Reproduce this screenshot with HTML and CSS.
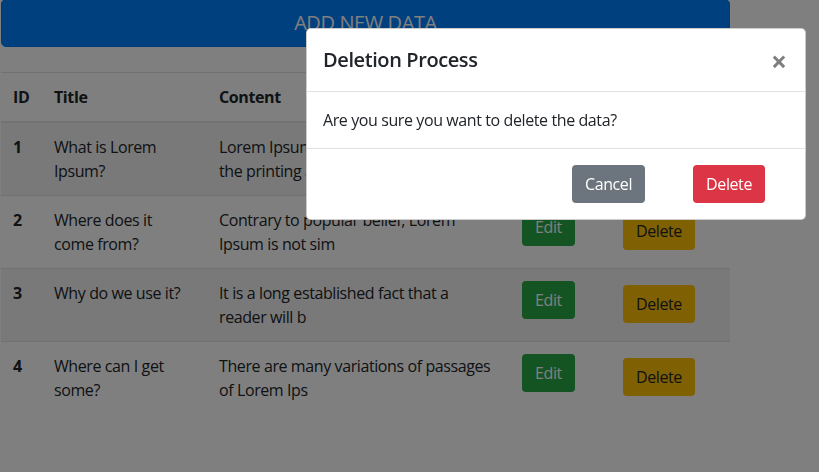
FILE: index.html
```html
<!DOCTYPE html>
<html lang="en">
<head>
  <meta charset="UTF-8">
  <meta name="viewport" content="width=device-width, initial-scale=1.0">
  <title>Data List</title>
  <link rel="stylesheet" href="styles.css">
</head>
<body>
  <div class="page">
    <button class="btn btn-add">ADD NEW DATA</button>

    <table class="data-table">
      <thead>
        <tr>
          <th class="col-id">ID</th>
          <th class="col-title">Title</th>
          <th class="col-content">Content</th>
          <th class="col-edit"></th>
          <th class="col-delete"></th>
        </tr>
      </thead>
      <tbody>
        <tr>
          <td class="cell-id">1</td>
          <td>What is Lorem Ipsum?</td>
          <td>Lorem Ipsum is simply dummy text of the printing a</td>
          <td><button class="btn btn-edit">Edit</button></td>
          <td><button class="btn btn-remove">Delete</button></td>
        </tr>
        <tr>
          <td class="cell-id">2</td>
          <td>Where does it come from?</td>
          <td>Contrary to popular belief, Lorem Ipsum is not sim</td>
          <td><button class="btn btn-edit">Edit</button></td>
          <td><button class="btn btn-remove">Delete</button></td>
        </tr>
        <tr>
          <td class="cell-id">3</td>
          <td>Why do we use it?</td>
          <td>It is a long established fact that a reader will b</td>
          <td><button class="btn btn-edit">Edit</button></td>
          <td><button class="btn btn-remove">Delete</button></td>
        </tr>
        <tr>
          <td class="cell-id">4</td>
          <td>Where can I get some?</td>
          <td>There are many variations of passages of Lorem Ips</td>
          <td><button class="btn btn-edit">Edit</button></td>
          <td><button class="btn btn-remove">Delete</button></td>
        </tr>
      </tbody>
    </table>
  </div>

  <!-- Delete confirmation modal -->
  <div class="modal-backdrop"></div>
  <div class="modal">
    <div class="modal-header">
      <h5 class="modal-title">Deletion Process</h5>
      <button class="close" aria-label="Close">&times;</button>
    </div>
    <div class="modal-body">
      <p>Are you sure you want to delete the data?</p>
    </div>
    <div class="modal-footer">
      <button class="btn btn-cancel">Cancel</button>
      <button class="btn btn-danger">Delete</button>
    </div>
  </div>
</body>
</html>
```

FILE: styles.css
```css
/* Reset */
* {
  margin: 0;
  padding: 0;
  box-sizing: border-box;
}

body {
  font-family: "Open Sans", "Noto Sans", sans-serif;
  font-size: 16px;
  line-height: 1.5;
  letter-spacing: -0.025em;
  color: #212529;
  background-color: #ffffff;
  overflow: hidden;
}

/* Page */
.page {
  width: 729px;
  margin: -1px 0 0 1px;
}

/* Buttons */
.btn {
  font-family: inherit;
  font-size: 1rem;
  line-height: 1.5;
  letter-spacing: inherit;
  padding: 6px 12px;
  border: 1px solid transparent;
  border-radius: 4px;
  cursor: pointer;
}

.btn-add {
  display: block;
  width: 100%;
  padding: 8px 16px;
  font-size: 1.25rem;
  color: #ffffff;
  background-color: #0080ff;
  border-color: #0079f2;
  border-radius: 5px;
}

.btn-edit {
  color: #ffffff;
  background-color: #28a745;
}

.btn-remove {
  margin-top: 4px;
  color: #212529;
  background-color: #ffc107;
}

/* Table */
.data-table {
  width: 100%;
  margin-top: 25px;
  border-collapse: collapse;
  table-layout: fixed;
}

.data-table th,
.data-table td {
  padding: 12px;
  text-align: left;
  vertical-align: top;
  border-top: 1px solid #dee2e6;
}

.data-table thead th {
  font-weight: 700;
  vertical-align: bottom;
  border-bottom: 2px solid #dee2e6;
}

.data-table tbody tr:nth-child(odd) {
  background-color: rgba(0, 0, 0, 0.05);
}

.cell-id {
  font-weight: 700;
}

.col-id { width: 41px; }
.col-title { width: 165px; }
.col-content { width: 303px; }
.col-edit { width: 101px; }
.col-delete { width: 119px; }

/* Modal */
.modal-backdrop {
  position: fixed;
  top: 0;
  left: 0;
  right: 0;
  bottom: 0;
  background-color: rgba(0, 0, 0, 0.5);
}

.modal {
  position: fixed;
  top: 28px;
  left: 306px;
  width: 500px;
  background-color: #ffffff;
  border: 1px solid rgba(0, 0, 0, 0.2);
  border-radius: 5px;
}

.modal-header {
  display: flex;
  align-items: flex-start;
  padding: 16px;
  border-bottom: 1px solid #dee2e6;
}

.modal-title {
  font-size: 1.25rem;
  font-weight: 600;
  line-height: 1.5;
}

.close {
  margin: -16px -16px -16px auto;
  padding: 18px 18px 16px 16px;
  font-family: inherit;
  font-size: 1.75rem;
  font-weight: 700;
  line-height: 1;
  color: #000000;
  opacity: 0.5;
  background: transparent;
  border: none;
}

.modal-body {
  padding: 16px;
}

.modal-footer {
  display: flex;
  justify-content: flex-end;
  gap: 48px;
  padding: 16px 40px 16px 16px;
  border-top: 1px solid #dee2e6;
}

.btn-cancel {
  color: #ffffff;
  background-color: #6c757d;
}

.btn-danger {
  color: #ffffff;
  background-color: #dc3545;
}
```
